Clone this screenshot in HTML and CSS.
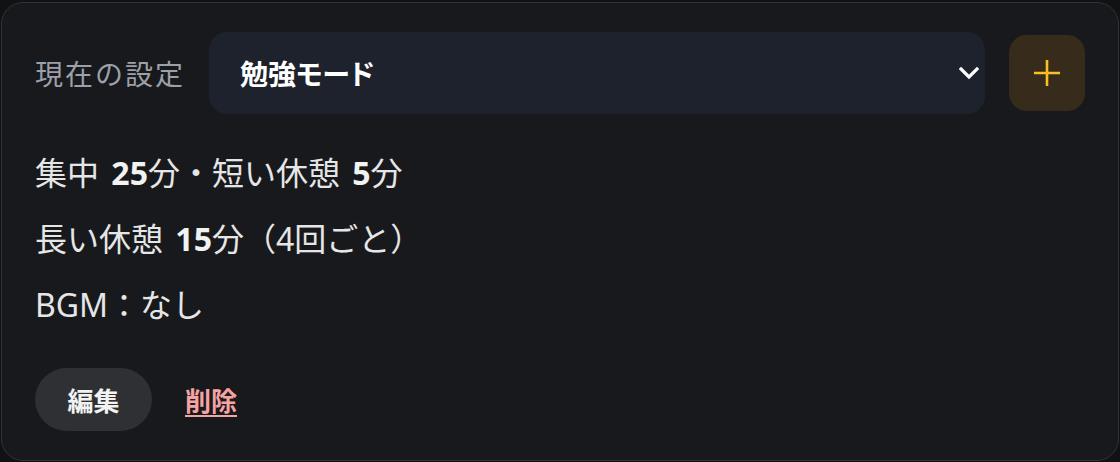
FILE: index.html
```html
<!DOCTYPE html>
<html lang="ja">
<head>
<meta charset="utf-8">
<link rel="stylesheet" href="styles.css">
</head>
<body>
<div class="card">
  <div class="header">
    <span class="label">現在の設定</span>
    <div class="select">
      <span class="select-text">勉強モード</span>
      <svg class="chevron" width="20" height="14" viewBox="0 0 20 14"><path d="M2 3 L10 11 L18 3" fill="none" stroke="#ffffff" stroke-width="3.2" stroke-linecap="square"/></svg>
    </div>
    <button class="add" type="button">
      <svg width="28" height="28" viewBox="0 0 28 28"><path d="M14 1 V27 M1 14 H27" stroke="#fbbf24" stroke-width="2.6"/></svg>
    </button>
  </div>
  <div class="info">
    <p class="line">集中 <b>25</b>分・短い休憩 <b>5</b>分</p>
    <p class="line">長い休憩 <b>15</b>分（4回ごと）</p>
    <p class="line">BGM：なし</p>
  </div>
  <div class="actions">
    <button class="edit" type="button">編集</button>
    <a class="delete" href="#">削除</a>
  </div>
</div>
</body>
</html>
```

FILE: styles.css
```css
html, body {
  margin: 0;
  padding: 0;
  background: #111214;
}
body {
  font-family: "Noto Sans", "Noto Sans CJK JP", sans-serif;
  padding: 2px 1px 1px 1px;
}
.card {
  box-sizing: border-box;
  height: 459px;
  background: #18191c;
  border: 1px solid #303236;
  border-radius: 22px;
  padding: 29px 33px 29px 33px;
  display: flex;
  flex-direction: column;
}
.header {
  display: flex;
  align-items: center;
  gap: 24px;
}
.label {
  color: #9ca0a8;
  font-size: 28px;
  letter-spacing: 2px;
  white-space: nowrap;
}
.select {
  flex: 1;
  height: 82px;
  background: #1e222d;
  border-radius: 18px;
  display: flex;
  align-items: center;
  justify-content: space-between;
  padding: 0 6px 0 31px;
  box-sizing: border-box;
}
.select-text {
  color: #ffffff;
  font-weight: 700;
  font-size: 28px;
  font-feature-settings: "palt";
}
.add {
  width: 76px;
  height: 76px;
  border: none;
  border-radius: 18px;
  background: #372c1c;
  display: flex;
  align-items: center;
  justify-content: center;
  padding: 0;
}
.info {
  margin-top: 26px;
}
.line {
  margin: 0;
  font-size: 32px;
  line-height: 66px;
  color: #e6e6e6;
  word-spacing: 4px;
}
.line b {
  font-weight: 700;
  color: #f2f2f2;
}
.actions {
  margin-top: 30px;
  display: flex;
  align-items: center;
  gap: 33px;
}
.edit {
  width: 117px;
  height: 63px;
  border: none;
  border-radius: 32px;
  background: #2f3034;
  color: #f2f2f2;
  font-family: "Noto Sans", "Noto Sans CJK JP", sans-serif;
  font-weight: 700;
  font-size: 26px;
  padding: 0;
}
.delete {
  color: #f6a3a3;
  font-weight: 700;
  font-size: 26px;
  text-decoration: underline;
  text-underline-offset: 4px;
  text-decoration-thickness: 2px;
}
```
